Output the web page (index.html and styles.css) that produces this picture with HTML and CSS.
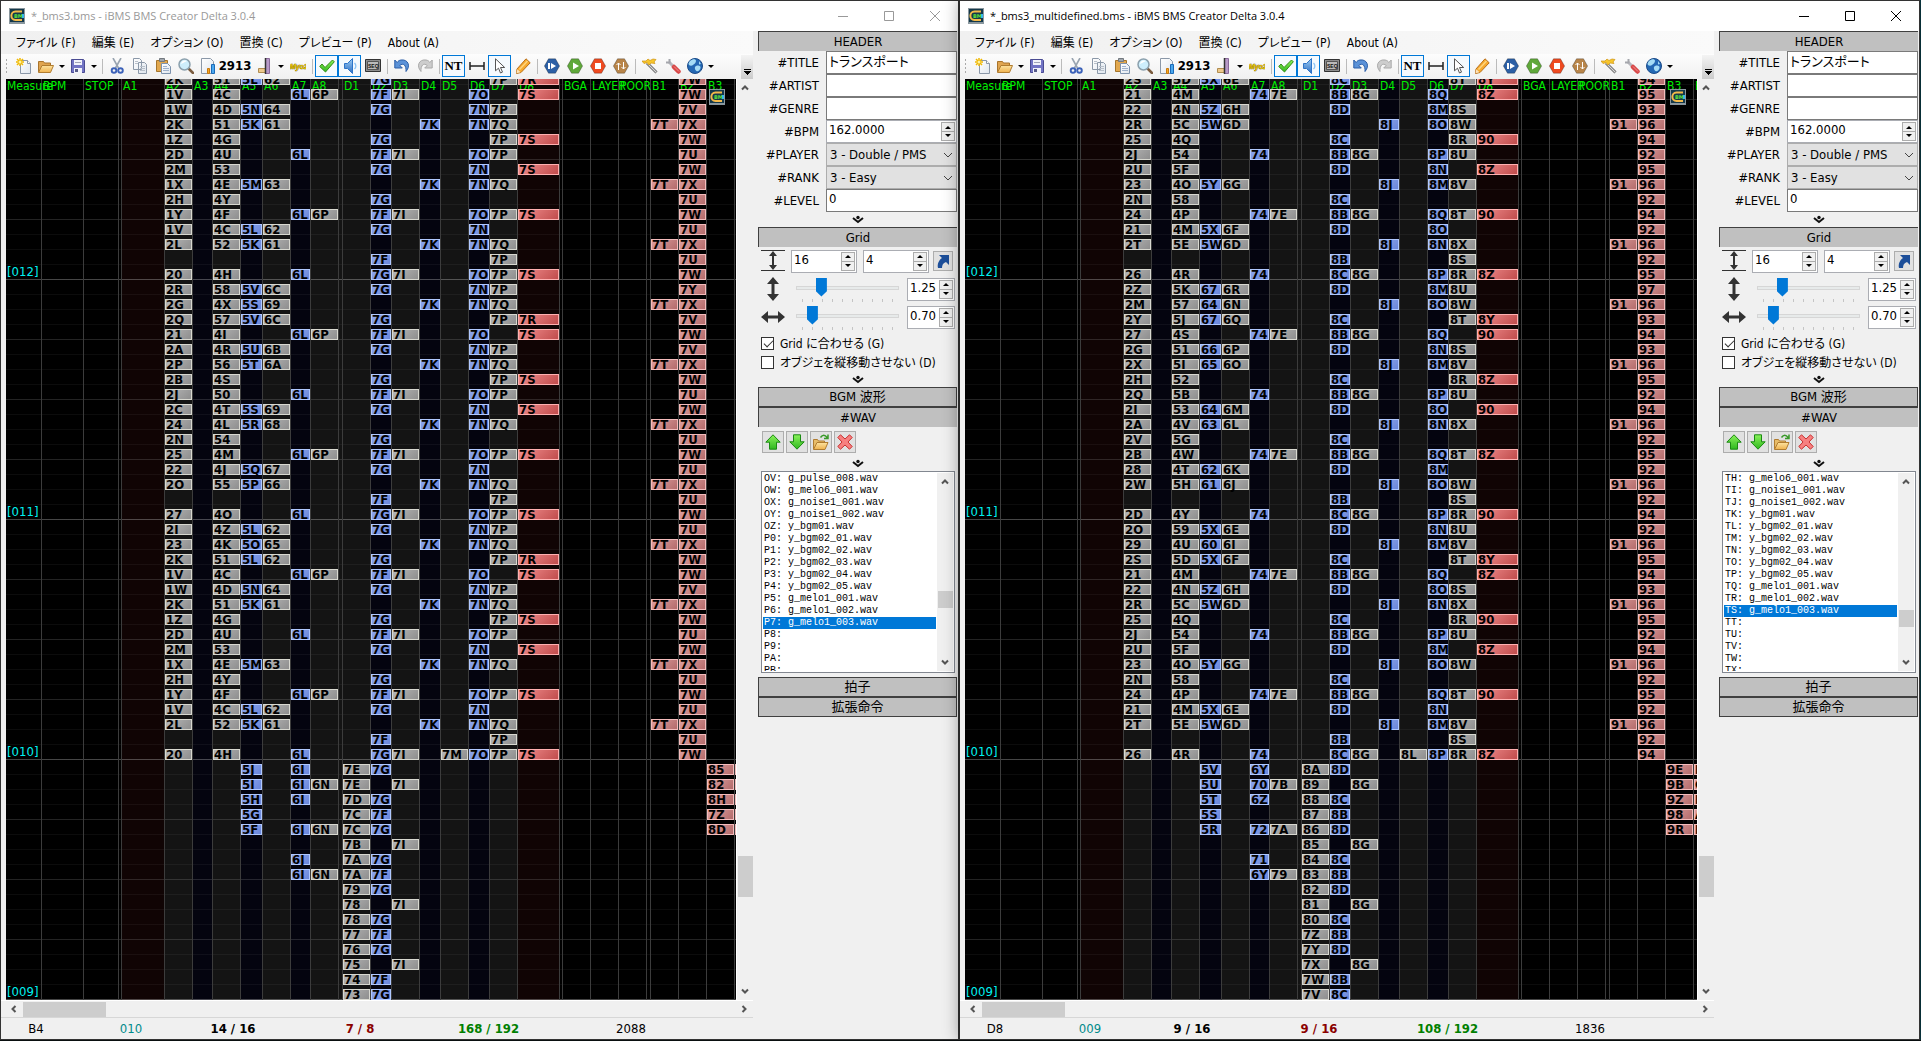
FILE: index.html
```html
<!DOCTYPE html>
<html lang="ja">
<head>
<meta charset="utf-8">
<title>iBMS BMS Creator Delta 3.0.4</title>
<link rel="stylesheet" href="styles.css">
</head>
<body>
<svg class="sprite" aria-hidden="true">
  <defs>
    <linearGradient id="g-blue" x2="0" y2="1"><stop offset="0" stop-color="#9ccdf5"/><stop offset="1" stop-color="#2d6fc4"/></linearGradient>
    <linearGradient id="g-gold" x2="0" y2="1"><stop offset="0" stop-color="#fde3a0"/><stop offset="1" stop-color="#eeb14d"/></linearGradient>
    <linearGradient id="g-page" x2="1" y2="1"><stop offset="0" stop-color="#fff"/><stop offset="1" stop-color="#dfe6ee"/></linearGradient>
    <linearGradient id="g-green" x2="0" y2="1"><stop offset="0" stop-color="#8af25a"/><stop offset="1" stop-color="#2fb81f"/></linearGradient>
  </defs>
  <symbol id="logo" viewBox="0 0 16 16"><path fill="#8a979e" d="M0 0h16v16H0z"/><path fill="#14384a" d="M1 1h14v13H1z"/><path fill="none" stroke="#f2b94a" stroke-width="2" d="M13 3.500H6.500C1 3.500 1 12 6.500 12H13"/><text x="5" y="10" font-family="DejaVu Sans" font-size="5" font-weight="700" fill="#5fe03a">BM</text><path fill="#35b8e8" d="M13 6h2v4h-2z"/></symbol>
  <symbol id="new" viewBox="0 0 16 16"><path fill="url(#g-page)" stroke="#8a97a8" d="M4.500 2.500h7l3 3v10h-10z"/><path fill="#fff" stroke="#8a97a8" d="M11.500 2.500v3h3"/><path stroke="#f0b800" stroke-width="1.500" d="M4 0v8M0 4h8M1 1l6 6M7 1L1 7"/><circle cx="4" cy="4" r="1.500" fill="#fff3a0"/></symbol>
  <symbol id="open" viewBox="0 0 16 16"><path fill="#e0a550" stroke="#a9742c" d="M.5 14V3.500h5l1 1.500h6v3"/><path fill="url(#g-gold)" stroke="#b07c30" d="M.5 14.500L4 7.500h11.500l-3 7z"/></symbol>
  <symbol id="save" viewBox="0 0 16 16"><path fill="#7274c4" stroke="#4a4b92" d="M1.500 1.500h12l1 1v12h-13z"/><path fill="#f2f3fa" d="M4 2h8v5H4zM4 10h8v5H4z"/><path fill="#575a88" d="M5 11h3v3H5z"/><path stroke="#a0a4b8" d="M5 4.500h6"/></symbol>
  <symbol id="cut" viewBox="0 0 16 16"><path stroke="#99a4b0" stroke-width="1.600" d="M4 0l5.500 10M12 0L6.500 10"/><circle cx="5" cy="12.500" r="2.300" fill="none" stroke="#3b61b8" stroke-width="1.900"/><circle cx="11.500" cy="12.500" r="2.300" fill="none" stroke="#3b61b8" stroke-width="1.900"/></symbol>
  <symbol id="copy" viewBox="0 0 16 16"><path fill="url(#g-page)" stroke="#8b98a8" d="M1.500.5h6l2 2v9h-8zM6.500 4.500h6l2 2v9h-8z"/><path stroke="#b8c0ca" d="M8 8.500h5M8 10.500h5M8 12.500h5M3 3.500h3M3 5.500h3"/></symbol>
  <symbol id="paste" viewBox="0 0 16 16"><path fill="#e2a84e" stroke="#a5752c" d="M1.500 2.500h11v11h-11z"/><path fill="#a0a6ad" stroke="#747a80" d="M4.500.5h5v3h-5z"/><path fill="url(#g-page)" stroke="#7d93ae" d="M6.500 5.500h6l3 3v7h-9z"/><path stroke="#9fb2cc" d="M8 8.500h4M8 10.500h6M8 12.500h6"/></symbol>
  <symbol id="find" viewBox="0 0 16 16"><path stroke="#7a5c40" stroke-width="2.500" stroke-linecap="round" d="M11 11l4 4"/><circle cx="6.500" cy="6.500" r="5.500" fill="#cdeefc" stroke="#8ba0ad" stroke-width="1.500"/><path fill="#fff" d="M3 6a4 4 0 0 1 6-3z"/></symbol>
  <symbol id="stats" viewBox="0 0 16 16"><path fill="url(#g-page)" stroke="#8b98a8" d="M1.500.5h9l3 3v12h-12z"/><path fill="#f6a720" stroke="#c77910" d="M7.500 10.500h2v5h-2z"/><path fill="#4aa8ee" stroke="#1b6ab8" d="M11.500 6.500h3v9h-3z"/></symbol>
  <symbol id="lane" viewBox="0 0 16 16"><path fill="#b89ac8" stroke="#8a6a9a" d="M8.500.5h4v15h-4z"/><path fill="#edc98c" stroke="#b08c50" d="M1.500 10.500h7v4h-7z"/><path stroke="#333" stroke-width="1.500" d="M8.500 0v16"/></symbol>
  <symbol id="myo" viewBox="0 0 16 16"><text x="0" y="11" font-family="Liberation Sans" font-size="7" font-style="italic" font-weight="700" fill="#e8c800" stroke="#6a5200" stroke-width=".6" paint-order="stroke">Myo2</text></symbol>
  <symbol id="check" viewBox="0 0 16 16"><path fill="url(#g-green)" stroke="#358a18" d="M.7 8.500L3 6l3 3.500L13.500 2l1.800 1.800L6.500 14z"/></symbol>
  <symbol id="sound" viewBox="0 0 16 16"><path fill="url(#g-blue)" stroke="#2d74c8" d="M2.500 5.500h3l5-5v15l-5-5h-3z"/><path fill="none" stroke="#8bc4f6" stroke-width="1.300" d="M12.500 5a4 4 0 0 1 0 6"/></symbol>
  <symbol id="seq" viewBox="0 0 16 16"><path fill="#8e8e8e" stroke="#333" d="M.5 1.500h15v12H.5z"/><path fill="#bbb" stroke="#555" d="M2.500 3.500h11v8h-11z"/><text x="3" y="10" font-family="Liberation Sans" font-size="5" font-weight="700" fill="#111">SEQ</text></symbol>
  <symbol id="undo" viewBox="0 0 16 16"><path fill="#5b92d8" stroke="#2d5fa8" stroke-linejoin="round" d="M.8 2v8h7.500L5.800 7.500C9 4.500 12.500 7 12 13.500c5-5.500 2-12.500-5-11.500-2 .3-3 1.200-3.800 2.500z"/></symbol>
  <symbol id="redo" viewBox="0 0 16 16"><path fill="#cdcdcd" stroke="#aaa" stroke-linejoin="round" d="M15.200 2v8H7.700l2.500-2.500C7 4.500 3.500 7 4 13.500-1 8 2 1 9 2c2 .3 3 1.200 3.800 2.500z"/></symbol>
  <symbol id="hold" viewBox="0 0 16 16"><path fill="none" stroke="#222" stroke-width="1.500" d="M1 4v8M15 4v8M1 8h14"/></symbol>
  <symbol id="pointer" viewBox="0 0 16 16"><path fill="#fff" stroke="#555" d="M3.500.8v12l3-2.600 2 4.800 2-.9-2-4.600h4.200z"/></symbol>
  <symbol id="pencil" viewBox="0 0 16 16"><path fill="#f7a92d" stroke="#b8701a" d="M11 .8l4.200 4L6 14.500l-4.500 1L2 11z"/><path fill="#fbe3bc" d="M2.300 11.300l3.200 3-4 1z"/><path stroke="#fdd580" stroke-width="1.500" d="M4.500 11.500l8-8.500"/></symbol>
  <symbol id="hex" viewBox="0 0 16 16"><path d="M4.500.8h7L15.600 8l-4.100 7.200h-7L.4 8z" stroke="#0004"/></symbol>
  <symbol id="wand" viewBox="0 0 16 16"><path stroke="#555" stroke-width="2.800" d="M5 5l9.500 9.500"/><path stroke="#d8d8d8" stroke-width="1.200" d="M5 5l9.500 9.500"/><path fill="#f7c62d" stroke="#d09410" stroke-width=".7" d="M0 3l4 0 2-2 2 1.500 3-1.500 3 .5-2 2.500 1 1.500-4-.5-2 2-2-2.500-3 1z"/></symbol>
  <symbol id="wrench" viewBox="0 0 16 16"><path stroke="#b8b8be" stroke-width="3" d="M4 4l4 4"/><path fill="none" stroke="#a4a6ac" stroke-width="2" d="M4.500 1v3.500H1"/><path stroke="#d84848" stroke-width="4.500" stroke-linecap="round" d="M9 9l4.500 4.500"/><path stroke="#f39090" d="M9 8.500l5 5"/></symbol>
  <symbol id="globe" viewBox="0 0 16 16"><circle cx="8" cy="8" r="7.500" fill="#2468b4" stroke="#1b4a88"/><path fill="#a5dcf5" d="M3 3c3-2.500 6-2 6 0S7 6 6 7 3 8 2 7s0-3 1-4zM9 8c3-1 5 0 4.500 2S11 14 9.500 13 7 9 9 8zM12 3l2 3-2 .5z"/></symbol>
  <symbol id="up" viewBox="0 0 16 16"><path fill="url(#g-green)" stroke="#1b8a12" stroke-linejoin="round" d="M8 .8l7.200 7.400H11.500v7h-7v-7H.8z"/></symbol>
  <symbol id="down" viewBox="0 0 16 16"><path fill="url(#g-green)" stroke="#1b8a12" stroke-linejoin="round" d="M8 15.200L.8 7.800h3.700v-7h7v7h3.700z"/></symbol>
  <symbol id="browse" viewBox="0 0 16 16"><path fill="#e8bc68" stroke="#b07c30" d="M.5 15V5.500h4l1 1.500h6v2"/><path fill="url(#g-gold)" stroke="#b07c30" d="M.5 15.500L4 8.500h11l-3 7z"/><path fill="none" stroke="#3a9a2a" stroke-width="1.500" d="M7.500 3.500C9.500.5 12 .5 14 3.500M15 .5v4h-4"/></symbol>
  <symbol id="delete" viewBox="0 0 16 16"><path fill="#f78080" stroke="#c83030" stroke-linejoin="round" d="M3.500.8L8 5l4.500-4.200 2.700 2.700L11 8l4.200 4.500-2.700 2.700L8 11l-4.500 4.200-2.700-2.700L5 8 .8 3.500z"/></symbol>
  <symbol id="more" viewBox="0 0 14 10"><path fill="none" stroke="#111" stroke-width="2" d="M2 3l5 4 5-4"/><circle cx="7" cy="2.500" r="1.700" fill="#111"/></symbol>
  <symbol id="chevron" viewBox="0 0 10 10"><path fill="none" stroke="currentColor" stroke-width="2" d="M2 3.500L5 6.500l3-3"/></symbol>
  <symbol id="thin-chevron" viewBox="0 0 10 10"><path fill="none" stroke="#444" d="M1 3l4 4 4-4"/></symbol>
  <symbol id="height-lines" viewBox="0 0 24 22"><path stroke="#333" d="M0 .5h24M0 20.500h24"/><path fill="#333" d="M12 1l4 5h-3v9h3l-4 5-4-5h3V6H8z"/></symbol>
  <symbol id="arrow-y" viewBox="0 0 24 24"><path fill="#333" d="M12 0l6 7h-4.500v10H18l-6 7-6-7h4.500V7H6z"/></symbol>
  <symbol id="arrow-x" viewBox="0 0 24 24"><path fill="#333" d="M0 12l7-6v4.500h10V6l7 6-7 6v-4.500H7V18z"/></symbol>
  <symbol id="jump" viewBox="0 0 16 16"><path fill="#1d4f9a" d="M4 2h10v10l-3-3c-3 1-4 3-4 6H3c-1-4 1-8 4-10z"/></symbol>
  <symbol id="minimize" viewBox="0 0 10 10"><path stroke="currentColor" d="M0 5.500h10"/></symbol>
  <symbol id="maximize" viewBox="0 0 10 10"><path fill="none" stroke="currentColor" d="M.5.5h9v9h-9z"/></symbol>
  <symbol id="close" viewBox="0 0 10 10"><path stroke="currentColor" d="M0 0l10 10M10 0L0 10"/></symbol>
</svg>

<main class="desktop"></main>

<template id="window">
  <section class="window">
    <header class="titlebar">
      <svg class="icon"><use href="#logo"/></svg>
      <h1 class="title"></h1>
      <button class="caption" aria-label="Minimize"><svg><use href="#minimize"/></svg></button>
      <button class="caption" aria-label="Maximize"><svg><use href="#maximize"/></svg></button>
      <button class="caption" aria-label="Close"><svg><use href="#close"/></svg></button>
    </header>
    <div class="body">
      <div class="editor">
        <nav class="menu">
          <button>ファイル (F)</button><button>編集 (E)</button><button>オプション (O)</button><button>置換 (C)</button><button>プレビュー (P)</button><button>About (A)</button>
        </nav>
        <div class="toolbar">
          <span class="grip"></span>
          <button class="tool" aria-label="New"><svg class="icon"><use href="#new"/></svg></button>
          <button class="tool split" aria-label="Open"><svg class="icon"><use href="#open"/></svg><i class="caret"></i></button>
          <button class="tool split" aria-label="Save"><svg class="icon"><use href="#save"/></svg><i class="caret"></i></button>
          <span class="sep"></span>
          <button class="tool" aria-label="Cut"><svg class="icon"><use href="#cut"/></svg></button>
          <button class="tool" aria-label="Copy"><svg class="icon"><use href="#copy"/></svg></button>
          <button class="tool" aria-label="Paste"><svg class="icon"><use href="#paste"/></svg></button>
          <button class="tool" aria-label="Find"><svg class="icon"><use href="#find"/></svg></button>
          <button class="tool count"><svg class="icon"><use href="#stats"/></svg>2913</button>
          <button class="tool split" aria-label="Lanes"><svg class="icon"><use href="#lane"/></svg><i class="caret"></i></button>
          <button class="tool" aria-label="Myo2"><svg class="icon"><use href="#myo"/></svg></button>
          <span class="sep"></span>
          <button class="tool on" aria-label="Check"><svg class="icon"><use href="#check"/></svg></button>
          <button class="tool on" aria-label="Sound"><svg class="icon"><use href="#sound"/></svg></button>
          <button class="tool" aria-label="Sequence"><svg class="icon"><use href="#seq"/></svg></button>
          <span class="sep"></span>
          <button class="tool" aria-label="Undo"><svg class="icon"><use href="#undo"/></svg></button>
          <button class="tool" aria-label="Redo"><svg class="icon"><use href="#redo"/></svg></button>
          <span class="sep"></span>
          <button class="tool on nt">NT</button>
          <button class="tool" aria-label="Long note"><svg class="icon"><use href="#hold"/></svg></button>
          <button class="tool on" aria-label="Select"><svg class="icon"><use href="#pointer"/></svg></button>
          <button class="tool" aria-label="Write"><svg class="icon"><use href="#pencil"/></svg></button>
          <span class="sep"></span>
          <button class="tool" aria-label="Play from start"><svg class="icon" viewBox="0 0 16 16"><use href="#hex" fill="#2c5fa5"/><path fill="#fff" d="M4 5h2v6H4zM7 5l5 3-5 3z"/></svg></button>
          <button class="tool" aria-label="Play"><svg class="icon" viewBox="0 0 16 16"><use href="#hex" fill="#5fa83a"/><path fill="#fff" d="M6 4.500l6 3.500-6 3.500z"/></svg></button>
          <button class="tool" aria-label="Stop"><svg class="icon" viewBox="0 0 16 16"><use href="#hex" fill="#ee4a20"/><path fill="#fff" d="M5 5h6v6H5z"/></svg></button>
          <button class="tool" aria-label="Playback options"><svg class="icon" viewBox="0 0 16 16"><use href="#hex" fill="#b8854a"/><path fill="none" stroke="#fff" d="M5.500 12V5M3.500 7l2-2 2 2M10.500 4v7M8.500 9l2 2 2-2"/></svg></button>
          <span class="sep"></span>
          <button class="tool" aria-label="Wizard"><svg class="icon"><use href="#wand"/></svg></button>
          <button class="tool" aria-label="Options"><svg class="icon"><use href="#wrench"/></svg></button>
          <button class="tool split" aria-label="Language"><svg class="icon"><use href="#globe"/></svg><i class="caret"></i></button>
          <button class="overflow" aria-label="More tools"><i class="caret"></i></button>
        </div>
        <div class="stage">
          <div class="chart"><svg class="icon badge"><use href="#logo"/></svg></div>
          <div class="vscroll">
            <svg class="arrow flip"><use href="#chevron"/></svg>
            <span class="thumb"></span>
            <svg class="arrow"><use href="#chevron"/></svg>
          </div>
        </div>
        <div class="hscroll">
          <svg class="arrow west"><use href="#chevron"/></svg>
          <span class="thumb"></span>
          <svg class="arrow east"><use href="#chevron"/></svg>
        </div>
        <footer class="status"></footer>
      </div>
      <aside class="side">
        <button class="bar">HEADER</button>
        <div class="fields">
          <label><span>#TITLE</span><input type="text" value="トランスポート"></label>
          <label><span>#ARTIST</span><input type="text"></label>
          <label><span>#GENRE</span><input type="text"></label>
          <label><span>#BPM</span><span class="spin"><input type="text" value="162.0000"><i class="steps"><i class="caret up"></i><i class="caret"></i></i></span></label>
          <label><span>#PLAYER</span><span class="pick"><select><option>3 - Double / PMS</option></select><svg><use href="#thin-chevron"/></svg></span></label>
          <label><span>#RANK</span><span class="pick"><select><option>3 - Easy</option></select><svg><use href="#thin-chevron"/></svg></span></label>
          <label><span>#LEVEL</span><input type="text" value="0"></label>
        </div>
        <button class="more" aria-label="More header fields"><svg><use href="#more"/></svg></button>
        <button class="bar">Grid</button>
        <div class="grid-row">
          <svg class="gauge"><use href="#height-lines"/></svg>
          <span class="spin"><input type="text" value="16" aria-label="Grid division"><i class="steps"><i class="caret up"></i><i class="caret"></i></i></span>
          <span class="spin"><input type="text" value="4" aria-label="Sub division"><i class="steps"><i class="caret up"></i><i class="caret"></i></i></span>
          <button class="square small" aria-label="Swap"><svg class="icon"><use href="#jump"/></svg></button>
        </div>
        <div class="zoom-row">
          <svg class="gauge"><use href="#arrow-y"/></svg>
          <input type="range" value="21" aria-label="Vertical scale">
          <span class="spin"><input type="text" value="1.25" aria-label="Vertical scale value"><i class="steps"><i class="caret up"></i><i class="caret"></i></i></span>
        </div>
        <div class="zoom-row">
          <svg class="gauge"><use href="#arrow-x"/></svg>
          <input type="range" value="11" aria-label="Horizontal scale">
          <span class="spin"><input type="text" value="0.70" aria-label="Horizontal scale value"><i class="steps"><i class="caret up"></i><i class="caret"></i></i></span>
        </div>
        <div class="ticks">
          <label class="tick"><input type="checkbox" checked>Grid に合わせる (G)</label>
          <label class="tick"><input type="checkbox">オブジェを縦移動させない (D)</label>
        </div>
        <button class="more" aria-label="More grid options"><svg><use href="#more"/></svg></button>
        <button class="bar closed">BGM 波形</button>
        <button class="bar">#WAV</button>
        <div class="wav-tools">
          <button class="square" aria-label="Move up"><svg class="icon"><use href="#up"/></svg></button>
          <button class="square" aria-label="Move down"><svg class="icon"><use href="#down"/></svg></button>
          <button class="square" aria-label="Browse"><svg class="icon"><use href="#browse"/></svg></button>
          <button class="square" aria-label="Remove"><svg class="icon"><use href="#delete"/></svg></button>
        </div>
        <button class="more" aria-label="More sound options"><svg><use href="#more"/></svg></button>
        <div class="listbox">
          <ul class="list"></ul>
          <div class="vscroll">
            <svg class="arrow flip"><use href="#chevron"/></svg>
            <span class="thumb"></span>
            <svg class="arrow"><use href="#chevron"/></svg>
          </div>
        </div>
        <button class="bar closed">拍子</button>
        <button class="bar closed">拡張命令</button>
      </aside>
    </div>
  </section>
</template>
<script src="app.js"></script>
</body>
</html>
```
FILE: styles.css
```css
* { box-sizing: border-box; }

body {
  margin: 0;
  min-height: 100vh;
  background: #0a0f10;
  color: #000;
  font: 13px/16px "DejaVu Sans Condensed", "Noto Sans CJK JP", sans-serif;
  font-feature-settings: "palt";
}

button, input, select {
  margin: 0;
  padding: 0;
  border: 0;
  border-radius: 0;
  background: none;
  color: inherit;
  font: inherit;
  font-feature-settings: inherit;
}

.sprite { position: absolute; width: 0; height: 0; }
.icon { display: block; flex: none; width: 16px; height: 16px; }

.desktop { display: flex; padding-right: 1px; background: #0b3a44; }

.window {
  flex: 1 1 50%;
  min-width: 0;
  border: solid #333;
  border-width: 1px 2px 1px 1px;
  background: #f0f0f0;
}
.window + .window {
  z-index: 1;
  border-width: 1px 1px 1px 0;
  box-shadow: 0 0 16px #0006;
}

/* title bar */
.titlebar { display: flex; align-items: center; height: 30px; padding-left: 8px; background: #fff; }
.title { flex: 1; margin: 0 0 0 6px; font: 11px/16px "Open Sans", "Noto Sans", sans-serif; }
.caption { width: 46px; height: 30px; padding-left: 18px; }
.caption svg { display: block; width: 10px; height: 10px; }
.inactive .titlebar { color: #999; }

.body { display: flex; align-items: flex-start; }
.editor { flex: 1; min-width: 0; }

/* menu and toolbar */
.menu { display: flex; gap: 16px; height: 23px; padding: 0 15px; background: linear-gradient(90deg, #f0f0f0, #fafafa); font-size: 12px; white-space: nowrap; }
.toolbar { display: flex; align-items: flex-start; height: 25px; padding: 1px 0; background: linear-gradient(#fdfdfd, #f0f0f0); }
.grip { width: 11px; height: 16px; margin-top: 3px; background: radial-gradient(circle, #aaa 1px, transparent 1px) 0 0 / 11px 4px; }
.tool { display: flex; flex: none; align-items: center; justify-content: center; width: 23px; height: 22px; }
.split { width: 32px; gap: 5px; }
.count { width: 57px; gap: 3px; font-weight: 700; font-size: 13px; }
.on { border: 1px solid #0078d7; background: #f5fafe; }
.nt { font: 700 13px/16px "Liberation Serif", serif; }
.sep { flex: none; width: 6px; height: 15px; margin-top: 4px; background: linear-gradient(#bbb, #bbb) 3px 0 / 1px 100% no-repeat; }
.caret { width: 0; height: 0; border: 3px solid transparent; border-top-color: currentColor; border-bottom: 0; }
.caret.up { border-top: 0; border-bottom: 3px solid currentColor; }
.overflow { display: flex; align-items: flex-end; justify-content: center; width: 12px; height: 24px; margin-left: auto; padding-bottom: 4px; background: linear-gradient(#f4f4f4, #ccc); }
.overflow .caret { width: 7px; height: 6px; border: 0; background: conic-gradient(from -45deg at 50% 100%, #000 90deg, transparent 0) 0 2px / 7px 4px no-repeat, linear-gradient(#000, #000) 0 0 / 7px 1px no-repeat; }

/* chart */
.stage { display: flex; padding-left: 5px; }
.chart { position: relative; display: flex; flex: 1; min-width: 0; height: 921px; overflow: hidden; background: #000; }
.badge { position: absolute; top: 10px; right: 11px; z-index: 3; }
.lane {
  display: grid;
  flex: none;
  grid-auto-rows: 15px;
  grid-template-columns: 100%;
  align-items: start;
  height: 930px;
  margin-top: -5px;
  border-right: 1px solid #3c3c3c;
  background-image:
    repeating-linear-gradient(transparent 0 205px, #ffffff28 205px 206px, transparent 206px 240px),
    repeating-linear-gradient(transparent 0 25px, #ffffff18 25px 26px, transparent 26px 60px),
    repeating-linear-gradient(transparent 0 10px, #ffffff0c 10px 11px, transparent 11px 15px);
}
.plain { background-color: #000; }
.gray { background-color: #141414; }
.blue { background-color: #04040f; }
.red { background-color: #100404; }
.lane-name {
  z-index: 1;
  grid-area: 1 / 1 / 3 / 2;
  margin: 4px 0 0;
  padding-left: 1px;
  color: #00f000;
  font-size: 12px;
  font-weight: 400;
  white-space: nowrap;
}
.measure { z-index: 1; grid-column: 1; align-self: end; padding: 0 0 7px 1px; color: #00f0f0; line-height: 10px; white-space: nowrap; }
.note {
  z-index: 2;
  grid-column: 1;
  height: 11px;
  border: 1px solid #d8d8d0;
  background: linear-gradient(135deg, #b8b8b8, #8e8e8e);
  font-weight: 700;
  line-height: 9px;
  white-space: nowrap;
}
.blue .note { border-color: #b0c8ff; background: linear-gradient(135deg, #90a8ec, #6a86da); }
.red .note { border-color: #ffb0b0; background: linear-gradient(135deg, #f29090, #c04c4c); }
.plain .note { border-color: #f4bcbc; background: linear-gradient(135deg, #dea0a0, #b46c6c); }

/* scroll bars */
.arrow { flex: none; width: 10px; height: 10px; color: #555; }
.flip { transform: rotate(180deg); }
.west { transform: rotate(90deg); }
.east { transform: rotate(-90deg); }
.vscroll { display: flex; flex: none; flex-direction: column; align-items: center; width: 17px; padding: 4px 0; border-left: 1px solid #fff; }
.vscroll .thumb { width: 15px; height: 41px; margin-top: 763px; margin-bottom: auto; background: #cdcdcd; }
.hscroll { display: flex; align-items: center; height: 17px; padding: 0 4px 0 8px; border-top: 1px solid #fff; }
.hscroll .thumb { width: 83px; height: 15px; margin-left: 4px; margin-right: auto; background: #cdcdcd; }

.status { display: grid; grid-template-columns: 70px 120px 84px 170px 87px 198px; height: 22px; padding-top: 3px; border-top: 1px solid #d7d7d7; text-align: center; }
.status b:nth-child(4) { color: #8b0000; }
.status b:nth-child(5) { color: #008000; }
.status span:nth-child(2) { color: #008b8b; }

/* side panel */
.side { display: flex; flex: none; flex-direction: column; width: 205px; padding: 0 1px 0 5px; }
.bar { height: 20px; padding-top: 1px; border: solid #404040; border-width: 1px 0 0 1px; background: #c0c0c0; line-height: 18px; }
.closed { padding-top: 0; border-width: 1px; }
.fields label { display: grid; grid-template-columns: 61px 1fr; gap: 7px; align-items: center; height: 23px; text-align: right; }
.fields input, .pick { height: 23px; width: 100%; }
.fields > label > input, .pick { border: 1px solid #7a7a7a; }
.fields input, .spin input { min-width: 0; padding: 0 2px 4px; background: #fff; }
.spin { display: flex; height: 23px; border: 1px solid #abadb3; background: #fff; text-align: left; }
.spin input { flex: 1; width: 0; height: 21px; }
.steps { display: flex; flex: none; flex-direction: column; justify-content: space-around; align-items: center; width: 14px; margin: 1px; border: 1px solid #acacac; background: linear-gradient(#acacac, #acacac) 0 50% / 100% 1px no-repeat #f0f0f0; }
.pick { display: flex; align-items: center; border-color: #adadad; background: #e1e1e1; padding-right: 3px; }
.pick select { flex: 1; min-width: 0; padding-left: 3px; appearance: none; }
.pick svg { flex: none; width: 10px; height: 10px; }
.more { display: flex; align-items: center; justify-content: center; height: 15px; }
.more svg { width: 14px; height: 10px; }
.gauge { flex: none; width: 24px; height: 24px; }
.grid-row { display: flex; gap: 6px; align-items: center; height: 28px; padding: 0 4px 0 3px; }
.grid-row .spin { width: 66px; }
.square { display: flex; align-items: center; justify-content: center; width: 22px; height: 22px; border: 1px solid #adadad; background: #e1e1e1; }
.small { width: 20px; height: 20px; margin-left: -2px; }
.zoom-row { display: flex; align-items: center; height: 28px; padding: 0 2px 0 3px; }
.zoom-row .spin { width: 48px; margin-left: auto; }
.zoom-row input[type="range"] {
  width: 103px;
  height: 26px;
  margin-left: 11px;
  appearance: none;
  background: repeating-linear-gradient(90deg, #c4c4c4 0 1px, transparent 1px 10px) 6px 23px / 92px 3px no-repeat;
}
.zoom-row input::-webkit-slider-runnable-track { height: 4px; margin-bottom: 3px; border: 1px solid #d6d6d6; background: #e7eaea; }
.zoom-row input::-webkit-slider-thumb { width: 11px; height: 19px; margin-top: -9px; appearance: none; background: #0078d7; clip-path: polygon(0 0, 100% 0, 100% 72%, 50% 100%, 0 72%); }
.ticks { padding: 3px 0 0 3px; }
.tick { display: flex; align-items: center; gap: 6px; height: 19px; font-size: 12px; white-space: nowrap; }
.tick input { flex: none; width: 13px; height: 13px; border: 1px solid #333; background: #fff; appearance: none; }
.tick input:checked::after { content: ""; display: block; width: 4px; height: 8px; margin: 0 0 0 4px; border: solid #333; border-width: 0 1px 1px 0; transform: rotate(45deg); }
.wav-tools { display: flex; gap: 2px; padding: 4px 4px 3px; }
.listbox { display: flex; height: 202px; margin: 0 2px 4px 3px; border: 1px solid #828790; background: #fff; }
.list { flex: 1; min-width: 0; height: 198px; margin: 1px; padding: 0; overflow: hidden; list-style: none; font: 10px/12px "Liberation Mono", monospace; }
.list li { height: 12px; padding-left: 1px; white-space: pre; }
.list .chosen { background: #0078d7; color: #fff; }
.listbox .vscroll { width: 16px; margin: 1px 1px 1px 0; border: 0; background: #f0f0f0; }
.listbox .vscroll .thumb { height: 17px; margin-top: var(--scroll); }
```
FILE: app.js
```js
// Lanes from left to right: name, width, tint
const LANES = [
  ["Measure", 36, "plain"], ["BPM", 42, "plain"], ["STOP", 35, "plain"], ["", 3, "plain"],
  ["A1", 43, "red"], ["A2", 28, "gray"], ["A3", 20, "blue"], ["A4", 28, "gray"], ["A5", 22, "blue"],
  ["A6", 28, "gray"], ["A7", 20, "blue"], ["A8", 28, "gray"], ["", 4, "gray"],
  ["D1", 28, "gray"], ["D2", 21, "blue"], ["D3", 28, "gray"], ["D4", 21, "blue"], ["D5", 28, "gray"],
  ["D6", 21, "blue"], ["D7", 28, "gray"], ["D8", 42, "red"], ["", 3, "plain"],
  ["BGA", 28, "plain"], ["LAYER", 28, "plain"], ["POOR", 28, "plain"], ["", 4, "plain"],
  ["B1", 28, "plain"], ["B2", 28, "plain"], ["B3", 28, "plain"], ["B4", 28, "plain"],
];

const UPPER = ["A2", "A4", "A5", "A6", "A7", "A8", "D2", "D3", "D4", "D5", "D6", "D7", "D8", "B1", "B2"];
const LOWER = ["A5", "A7", "A8", "D1", "D2", "D3", "B3", "B4"];
const MEASURES = { 14: "[012]", 30: "[011]", 46: "[010]", 62: "[009]" };

const LEFT_REPEAT = `
1V 4C . . 6L 6P 7F 7I . . 7O . 7S . 7W
1W 4D 5N 64 . . 7G . . . 7N 7P . . 7V
2K 51 5K 61 . . . . 7K . 7N 7Q . 7T 7X
1Z 4G . . . . 7G . . . . 7P 7S . 7W
2D 4U . . 6L . 7F 7I . . 7O 7P . . 7U
2M 53 . . . . 7G . . . 7N . 7S . 7W
1X 4E 5M 63 . . . . 7K . 7N 7Q . 7T 7X
2H 4Y . . . . 7G . . . . . . . 7U
1Y 4F . . 6L 6P 7F 7I . . 7O 7P 7S . 7W
1V 4C 5L 62 . . 7G . . . 7N . . . 7U
2L 52 5K 61 . . . . 7K . 7N 7Q . 7T 7X
. . . . . . 7F . . . . 7P . . 7U`;

const WINDOWS = [
  {
    title: "*_bms3.bms - iBMS BMS Creator Delta 3.0.4",
    inactive: true,
    status: ["B4", "010", "14 / 16", "7 / 8", "168 / 192", "2088"],
    upper: `
2K 51 5L 62 . . 7G . . . . 7P 7R . 7W${LEFT_REPEAT}
20 4H . . 6L . 7G 7I . . 7O 7P 7S . 7W
2R 58 5V 6C . . 7G . . . 7N 7P . . 7Y
2G 4X 5S 69 . . . . 7K . 7N 7Q . 7T 7X
2Q 57 5V 6C . . 7G . . . . 7P 7R . 7V
21 4I . . 6L 6P 7F 7I . . 7O . 7S . 7W
2A 4R 5U 6B . . 7G . . . 7N 7P . . 7V
2P 56 5T 6A . . . . 7K . 7N 7Q . 7T 7X
2B 4S . . . . 7G . . . . 7P 7S . 7W
2J 50 . . 6L . 7F 7I . . 7O 7P . . 7U
2C 4T 5S 69 . . 7G . . . 7N . 7S . 7W
24 4L 5R 68 . . . . 7K . 7N 7Q . 7T 7X
2N 54 . . . . 7G . . . . . . . 7U
25 4M . . 6L 6P 7F 7I . . 7O 7P 7S . 7W
22 4J 5Q 67 . . 7G . . . 7N . . . 7U
2O 55 5P 66 . . . . 7K . 7N 7Q . 7T 7X
. . . . . . 7F . . . . 7P . . 7U
27 4O . . 6L . 7G 7I . . 7O 7P 7S . 7W
2I 4Z 5L 62 . . 7G . . . 7N 7P . . 7U
23 4K 5O 65 . . . . 7K . 7N 7Q . 7T 7X
2K 51 5L 62 . . 7G . . . . 7P 7R . 7W${LEFT_REPEAT}
20 4H . . 6L . 7G 7I . 7M 7O 7P 7S . 7W`,
    lower: `
5J 6I . 7E 7G . 85 -
5I 6I 6N 7E . 7I 82 -
5H 6I . 7D 7G . 8H -
5G . . 7C 7F . 7Z -
5F 6J 6N 7C 7G . 8D -
. . . 7B . 7I . .
. 6J . 7A 7G . . .
. 6I 6N 7A 7F . . .
. . . 79 7G . . .
. . . 78 . 7I . .
. . . 78 7G . . .
. . . 77 7F . . .
. . . 76 7G . . .
. . . 75 . 7I . .
. . . 74 7F . . .
. . . 73 7G . . .`,
    scroll: 104,
    chosen: 12,
    sounds: ["OV: g_pulse_008.wav", "OW: g_melo6_001.wav", "OX: g_noise1_001.wav", "OY: g_noise1_002.wav", "OZ: y_bgm01.wav", "P0: y_bgm02_01.wav", "P1: y_bgm02_02.wav", "P2: y_bgm02_03.wav", "P3: y_bgm02_04.wav", "P4: y_bgm02_05.wav", "P5: g_melo1_001.wav", "P6: g_melo1_002.wav", "P7: g_melo1_003.wav", "P8:", "P9:", "PA:", "PB:"],
  },
  {
    title: "*_bms3_multidefined.bms - iBMS BMS Creator Delta 3.0.4",
    status: ["D8", "009", "9 / 16", "9 / 16", "108 / 192", "1836"],
    upper: `
2S 5D 5X 6E . . 8C . . . . 8T 8Y . 94
21 4M . . 74 7E 8B 8G . . 8Q . 8Z . 95
22 4N 5Z 6H . . 8D . . . 8M 8S . . 93
2R 5C 5W 6D . . . . 8J . 8O 8W . 91 96
25 4Q . . . . 8C . . . . 8R 90 . 94
2J 54 . . 74 . 8B 8G . . 8P 8U . . 92
2U 5F . . . . 8D . . . 8N . 8Z . 95
23 4O 5Y 6G . . . . 8J . 8M 8V . 91 96
2N 58 . . . . 8C . . . . . . . 92
24 4P . . 74 7E 8B 8G . . 8Q 8T 90 . 94
21 4M 5X 6F . . 8D . . . 8O . . . 92
2T 5E 5W 6D . . . . 8J . 8N 8X . 91 96
. . . . . . 8B . . . . 8S . . 92
26 4R . . 74 . 8C 8G . . 8P 8R 8Z . 95
2Z 5K 67 6R . . 8D . . . 8M 8U . . 97
2M 57 64 6N . . . . 8J . 8O 8W . 91 96
2Y 5J 67 6Q . . 8C . . . . 8T 8Y . 93
27 4S . . 74 7E 8B 8G . . 8Q . 90 . 94
2G 51 66 6P . . 8D . . . 8N 8S . . 93
2X 5I 65 6O . . . . 8J . 8M 8V . 91 96
2H 52 . . . . 8C . . . . 8R 8Z . 95
2Q 5B . . 74 . 8B 8G . . 8P 8U . . 92
2I 53 64 6M . . 8D . . . 8O . 90 . 94
2A 4V 63 6L . . . . 8J . 8N 8X . 91 96
2V 5G . . . . 8C . . . . . . . 92
2B 4W . . 74 7E 8B 8G . . 8Q 8T 8Z . 95
28 4T 62 6K . . 8D . . . 8M . . . 92
2W 5H 61 6J . . . . 8J . 8O 8W . 91 96
. . . . . . 8B . . . . 8S . . 92
2D 4Y . . 74 . 8C 8G . . 8P 8R 90 . 94
2O 59 5X 6E . . 8D . . . 8N 8U . . 92
29 4U 60 6I . . . . 8J . 8M 8V . 91 96
2S 5D 5X 6F . . 8C . . . . 8T 8Y . 95
21 4M . . 74 7E 8B 8G . . 8Q . 8Z . 94
22 4N 5Z 6H . . 8D . . . 8O 8S . . 93
2R 5C 5W 6D . . . . 8J . 8N 8X . 91 96
25 4Q . . . . 8C . . . . 8R 90 . 95
2J 54 . . 74 . 8B 8G . . 8P 8U . . 92
2U 5F . . . . 8D . . . 8M . 8Z . 94
23 4O 5Y 6G . . . . 8J . 8O 8W . 91 96
2N 58 . . . . 8C . . . . . . . 92
24 4P . . 74 7E 8B 8G . . 8Q 8T 90 . 95
21 4M 5X 6E . . 8D . . . 8N . . . 92
2T 5E 5W 6D . . . . 8J . 8M 8V . 91 96
. . . . . . 8B . . . . 8S . . 92
26 4R . . 74 . 8C 8G . 8L 8P 8R 8Z . 94`,
    lower: `
5V 6Y . 8A 8D . 9E F
5U 70 7B 89 . 8G 9B C
5T 6Z . 88 8C . 9Z F
5S . . 87 8B . 98 A
5R 72 7A 86 8D . 9R F
. . . 85 . 8G . .
. 71 . 84 8C . . .
. 6Y 79 83 8B . . .
. . . 82 8D . . .
. . . 81 . 8G . .
. . . 80 8C . . .
. . . 7Z 8B . . .
. . . 7Y 8D . . .
. . . 7X . 8G . .
. . . 7W 8B . . .
. . . 7V 8C . . .`,
    scroll: 123,
    chosen: 11,
    sounds: ["TH: g_melo6_001.wav", "TI: g_noise1_001.wav", "TJ: g_noise1_002.wav", "TK: y_bgm01.wav", "TL: y_bgm02_01.wav", "TM: y_bgm02_02.wav", "TN: y_bgm02_03.wav", "TO: y_bgm02_04.wav", "TP: y_bgm02_05.wav", "TQ: g_melo1_001.wav", "TR: g_melo1_002.wav", "TS: g_melo1_003.wav", "TT:", "TU:", "TV:", "TW:", "TX:"],
  },
];

function add(parent, tag, className, text) {
  const el = document.createElement(tag);
  if (className) el.className = className;
  if (text) el.textContent = text;
  parent.append(el);
  return el;
}

function addNotes(lanes, text, names, firstRow) {
  text.trim().split("\n").forEach((line, i) => {
    line.split(" ").forEach((label, j) => {
      if (label === ".") return;
      const note = add(lanes[names[j]], "div", "note", label === "-" ? "" : label);
      note.style.gridRow = firstRow + i;
    });
  });
}

for (const data of WINDOWS) {
  const win = document.getElementById("window").content.cloneNode(true).firstElementChild;
  if (data.inactive) win.classList.add("inactive");
  win.querySelector(".title").textContent = data.title;

  const chart = win.querySelector(".chart");
  const lanes = {};
  for (const [name, width, tint] of LANES) {
    const lane = add(chart, "div", "lane " + tint);
    lane.style.width = width + "px";
    if (name) {
      lanes[name] = lane;
      add(lane, "h2", "lane-name", name);
    }
  }
  for (const row in MEASURES) {
    add(lanes.Measure, "span", "measure", MEASURES[row]).style.gridRow = row;
  }
  addNotes(lanes, data.upper, UPPER, 1);
  addNotes(lanes, data.lower, LOWER, 47);

  const status = win.querySelector(".status");
  data.status.forEach((text, i) => add(status, i > 1 && i < 5 ? "b" : "span", "", text));

  const list = win.querySelector(".list");
  data.sounds.forEach((text, i) => add(list, "li", i === data.chosen ? "chosen" : "", text));
  win.querySelector(".listbox").style.setProperty("--scroll", data.scroll + "px");

  document.querySelector(".desktop").append(win);
}
```
